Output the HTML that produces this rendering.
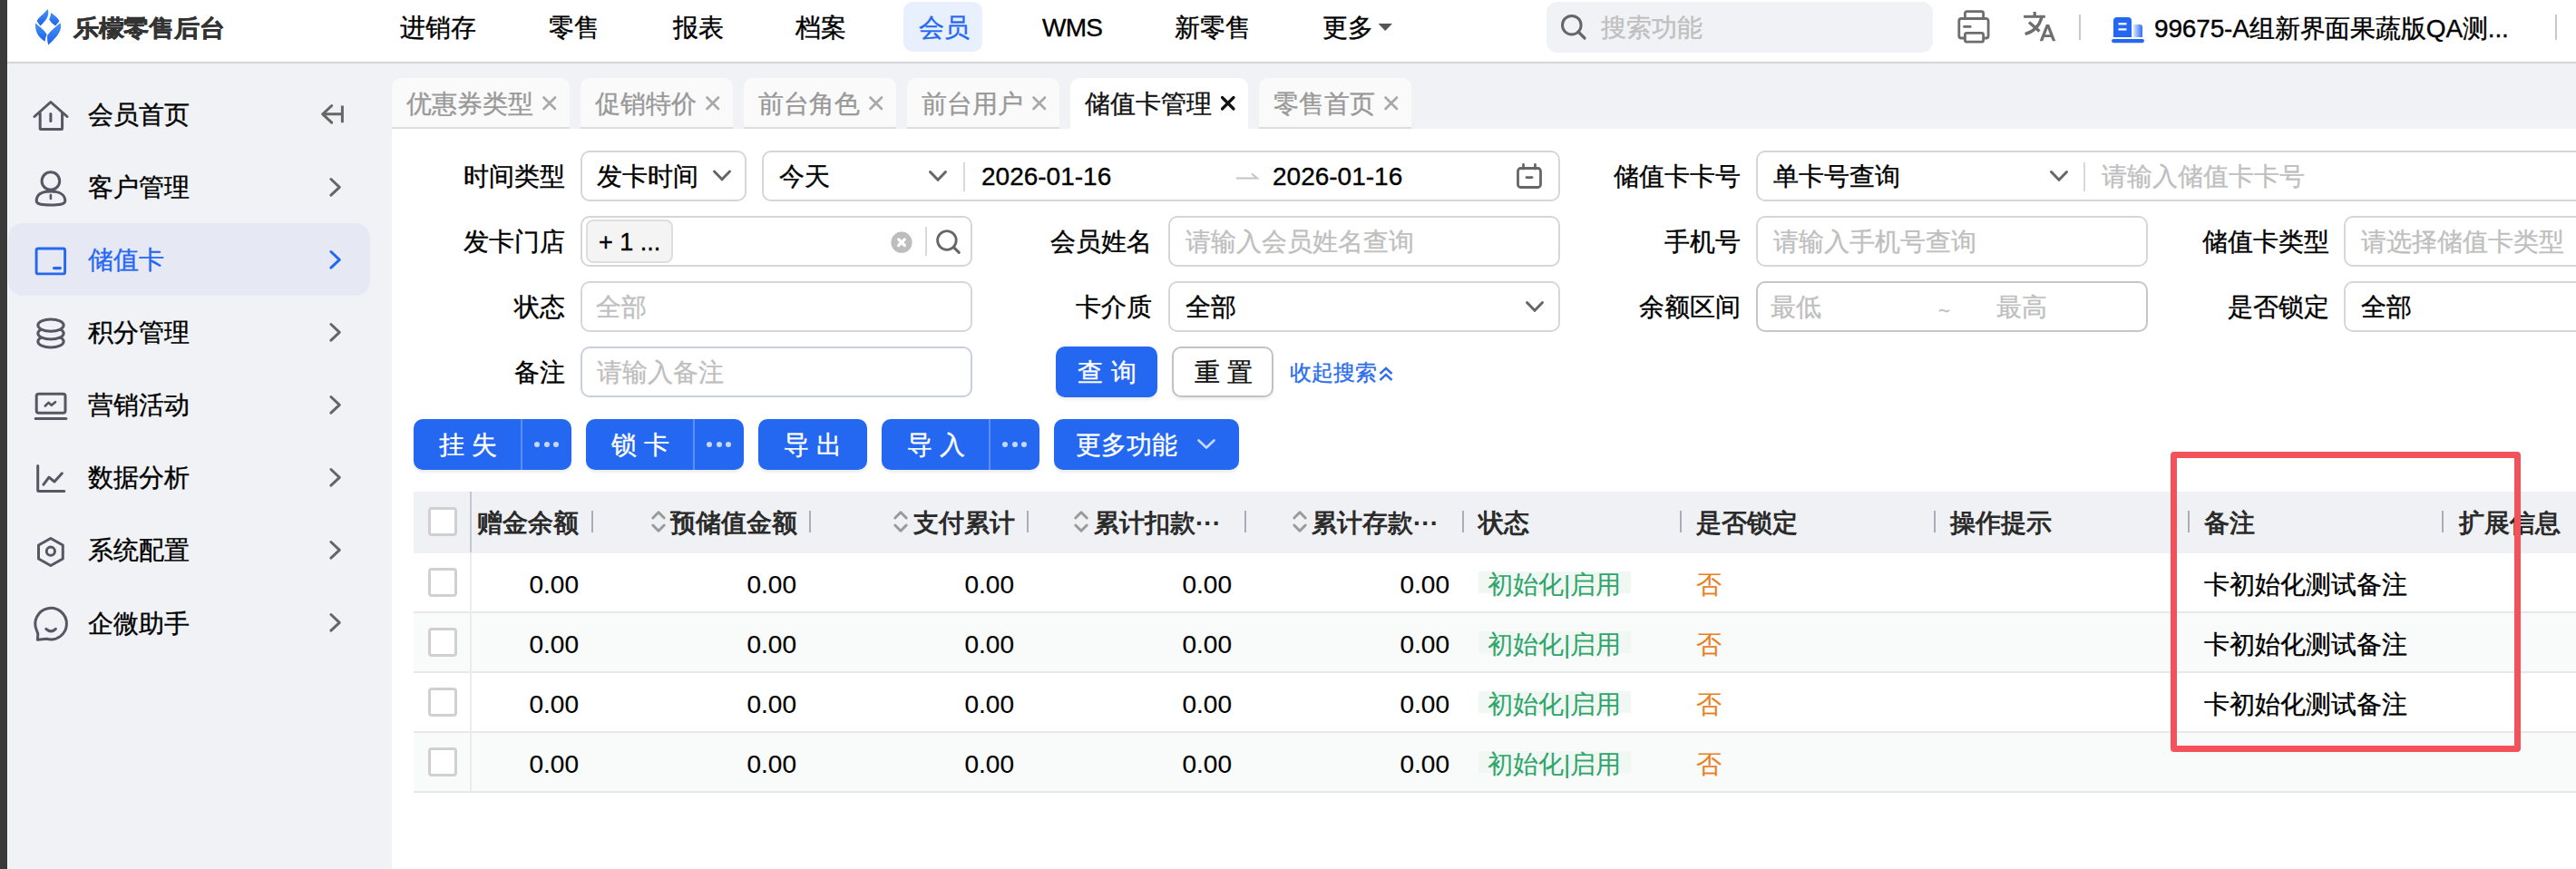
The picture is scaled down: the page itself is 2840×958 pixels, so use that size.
<!DOCTYPE html>
<html><head><meta charset="utf-8">
<style>
*{margin:0;padding:0;box-sizing:border-box}
html,body{width:2840px;height:958px;overflow:hidden;background:#fff;font-family:"Liberation Sans",sans-serif;color:#000}
.a{position:absolute}
.t{position:absolute;white-space:nowrap;font-size:28px;line-height:32px;-webkit-text-stroke:0.35px currentColor}
.r{text-align:right}
.ph{color:#bfbfbf}
.gy{color:#999}
.box{position:absolute;height:56px;border:2px solid #d6d6d6;border-radius:10px;background:#fff}
.tab{position:absolute;top:86px;height:56px;background:#fafafa;border-radius:10px 10px 0 0;border-bottom:2px solid #dcdcdc}
.btn{position:absolute;top:462px;height:56px;background:#2468f2;border-radius:10px;box-shadow:0 3px 3px rgba(0,0,0,0.07)}
.bt{color:#fff;letter-spacing:8px}
.dv{position:absolute;top:0;width:2px;height:56px;background:#5b8ff6}
.dots{position:absolute;top:487px;height:6px}
.dots i{position:absolute;top:0;width:6px;height:6px;border-radius:3px;background:#c6d7fb}
.hd{font-weight:bold;color:#2b2b2b;-webkit-text-stroke:0 !important}
.cb{position:absolute;left:472px;width:32px;height:32px;border:3px solid #d0d0d0;border-radius:4px;background:#fff}
.tag{position:absolute;left:1630px;width:168px;height:24px;background:#f1f8f4}
.gr{color:#2ea56a;-webkit-text-stroke:0.1px currentColor !important}.nm{-webkit-text-stroke:0.15px currentColor !important}
.or{color:#e8801e;-webkit-text-stroke:0.1px currentColor !important}
</style></head><body>
<!-- left window strip -->
<div class="a" style="left:0;top:0;width:8px;height:958px;background:#3a3a3a"></div>
<!-- header -->
<div class="a" style="left:8px;top:0;width:2832px;height:68px;background:#fff"></div>
<div class="a" style="left:8px;top:68px;width:2832px;height:2px;background:#d5d5d5"></div>
<!-- sidebar & content bg -->
<div class="a" style="left:8px;top:70px;width:2832px;height:888px;background:#f0f2f5"></div>
<div class="a" style="left:432px;top:142px;width:2408px;height:816px;background:#fff"></div>
<!-- logo -->
<svg class="a" style="left:34px;top:6px" width="40" height="48" viewBox="0 0 40 48">
<defs><linearGradient id="lg" x1="0" y1="0" x2="0" y2="1"><stop offset="0" stop-color="#4593f7"/><stop offset="1" stop-color="#1e62ea"/></linearGradient></defs>
<g fill="url(#lg)">
<path d="M18.5 4 C20.5 9 19 15 10.5 22.4 L6.6 17.2 C9 12.5 15 9 18.5 4 Z"/>
<path d="M22.1 8 C26.5 11 30 14 31.5 17.2 L27.1 22.4 C24 20.5 21.5 18 20.2 15.5 C21.3 13 22 10.5 22.1 8 Z"/>
<path d="M5 19.6 C9 23 15 27 17.7 32.3 C16.5 34.5 15.8 37 15.7 39.8 C8.5 35 4.5 30 5 19.6 Z"/>
<path d="M32.6 19.3 C34.5 27 31 33 19.3 43.6 C18 40 18 36 18.2 33.1 C22 27.5 28 23 32.6 19.3 Z"/>
</g></svg>
<div class="t" style="left:81px;top:17px;font-weight:bold;color:#333;font-size:28px;transform:scaleY(0.92);transform-origin:0 0;-webkit-text-stroke:0.5px #333;letter-spacing:-0.3px">乐檬零售后台</div>
<!-- nav -->
<div class="a" style="left:996px;top:2px;width:87px;height:55px;background:#e8effd;border-radius:10px"></div>
<div class="t" style="left:441px;top:15px">进销存</div>
<div class="t" style="left:605px;top:15px">零售</div>
<div class="t" style="left:742px;top:15px">报表</div>
<div class="t" style="left:877px;top:15px">档案</div>
<div class="t" style="left:1013px;top:15px;color:#2468f2">会员</div>
<div class="t" style="left:1149px;top:15px;letter-spacing:-0.8px">WMS</div>
<div class="t" style="left:1295px;top:15px">新零售</div>
<div class="t" style="left:1458px;top:15px">更多</div>
<svg class="a" style="left:1519px;top:25px" width="18" height="10"><path d="M0.5 1 L16 1 L8.2 9 Z" fill="#555"/></svg>
<!-- search -->
<div class="a" style="left:1705px;top:2px;width:426px;height:56px;background:#f1f2f5;border-radius:12px"></div>
<svg class="a" style="left:1715px;top:12px" width="40" height="40" viewBox="0 0 40 40"><circle cx="17.8" cy="15.7" r="10.3" fill="none" stroke="#666" stroke-width="3"/><path d="M25 23 L32 30" stroke="#666" stroke-width="3.2" stroke-linecap="round"/></svg>
<div class="t ph" style="left:1765px;top:15px">搜索功能</div>
<!-- printer -->
<svg class="a" style="left:2150px;top:5px" width="50" height="50" viewBox="0 0 50 50">
<g fill="none" stroke="#6e6e6e" stroke-width="2.8" stroke-linejoin="round">
<path d="M16.4 16 V9.6 a2 2 0 0 1 2 -2 H34.6 a2 2 0 0 1 2 2 V16"/>
<path d="M15.5 37 H12.3 a2.5 2.5 0 0 1 -2.5 -2.5 V18 a2.5 2.5 0 0 1 2.5 -2.5 H39.6 a2.5 2.5 0 0 1 2.5 2.5 V34.5 a2.5 2.5 0 0 1 -2.5 2.5 H36.5"/>
<rect x="16.4" y="31.4" width="20.2" height="9.8" rx="2"/>
<path d="M15.5 24.4 H22.2" stroke-linecap="round"/>
</g></svg>
<!-- translate -->
<svg class="a" style="left:2225px;top:8px" width="46" height="42" viewBox="0 0 46 42">
<g fill="none" stroke="#6e6e6e">
<path d="M6.1 10.3 H29.8" stroke-width="3"/>
<path d="M18.2 5 V10" stroke-width="3.2"/>
<path d="M26 11 C23.5 20 17 27 7.6 29.5" stroke-width="3.3"/>
<path d="M12 16.5 L23.5 26.5" stroke-width="3.3"/>
</g>
<path fill="#6e6e6e" fill-rule="evenodd" d="M30.8 19 L34.2 19 L41.3 37.2 L37.8 37.2 L36.2 33 L28.8 33 L27.2 37.2 L23.7 37.2 Z M29.9 30.2 L35.1 30.2 L32.5 23.2 Z"/>
</svg>
<div class="a" style="left:2292px;top:16px;width:2px;height:28px;background:#c8c8c8"></div>
<!-- building -->
<svg class="a" style="left:2326px;top:18px" width="40" height="32" viewBox="0 0 40 32">
<defs><linearGradient id="bg2" x1="0" y1="0" x2="1" y2="0"><stop offset="0" stop-color="#dbe6fd"/><stop offset="1" stop-color="#2f6ef2"/></linearGradient></defs>
<path d="M4 5 a4 4 0 0 1 4 -4 H20 a4 4 0 0 1 4 4 V23 H4 Z" fill="#2468f2"/>
<path d="M26 9 H33 a3 3 0 0 1 3 3 V23 H26 Z" fill="url(#bg2)"/>
<rect x="2" y="25" width="36" height="4.2" rx="2.1" fill="#2468f2"/>
<rect x="9.5" y="7.2" width="9" height="2.2" fill="#fff"/>
<rect x="9.5" y="13.3" width="9" height="2.2" fill="#fff"/>
</svg>
<div class="t" style="left:2375px;top:16px;letter-spacing:-0.15px">99675-A组新界面果蔬版QA测...</div>
<div class="a" style="left:2817px;top:16px;width:2px;height:28px;background:#c8c8c8"></div>
<!-- sidebar -->
<div class="a" style="left:8px;top:70px;width:1px;height:888px;background:#fafafa"></div>
<div class="a" style="left:9px;top:246px;width:399px;height:80px;background:#e6e9f4;border-radius:16px"></div>
<svg class="a" style="left:0;top:70px" width="432" height="660" viewBox="0 70 432 660">
<g fill="none" stroke="#555762" stroke-width="3" stroke-linecap="round" stroke-linejoin="round">
<!-- home -->
<path d="M38 128.5 L55.9 112.5 L74 128.5"/>
<path d="M44.2 125 V141.5 a1 1 0 0 0 1 1 H67.6 a1 1 0 0 0 1 -1 V125"/>
<path d="M55.9 125.5 V133.5"/>
<!-- person -->
<circle cx="55.9" cy="199.5" r="9.8"/>
<path d="M40.2 221.5 C40.2 214 47 211 55.9 211 C64.8 211 71.8 214 71.8 221.5 C71.8 225.5 64 226 55.9 226 C47.8 226 40.2 225.5 40.2 221.5 Z"/>
<path d="M55.9 215 V219" stroke-width="2.6"/>
<!-- coins -->
<ellipse cx="56" cy="376.5" rx="14.2" ry="6.6" fill="#f0f2f5"/>
<ellipse cx="56" cy="367.5" rx="14.2" ry="6.6" fill="#f0f2f5"/>
<ellipse cx="56" cy="358.6" rx="14.2" ry="6.6" fill="#f0f2f5"/>
<!-- monitor -->
<rect x="40.2" y="434.2" width="31.8" height="21" rx="2.5"/>
<path d="M39.2 461.5 H72.9"/>
<path d="M49.8 447.5 L53.5 443.8 L56.8 446.8 L61 443.2" stroke-width="2.6"/>
<!-- chart -->
<path d="M41.7 513.5 V540.5 a1 1 0 0 0 1 1 H70.8"/>
<path d="M48 534.2 L54 526.2 L60 531 L68.4 521.8"/>
<!-- hexagon -->
<path d="M55.9 593.5 L69.3 601 V616 L55.9 623.5 L42.5 616 V601 Z"/>
<circle cx="55.9" cy="607.7" r="4.6"/>
<!-- chat -->
<path d="M40.4 694.8 A17.3 17.3 0 1 1 51.5 704.3 L41.4 705.3 L41.8 698.8 Z"/>
<path d="M50.8 693.4 C54.5 696.8 58 696.8 61.4 693.4"/>
</g>
<g fill="none" stroke="#2468f2" stroke-width="2.9" stroke-linecap="round" stroke-linejoin="round">
<rect x="40.1" y="274" width="31.5" height="27.9" rx="2"/>
<path d="M59.6 295.6 H66.4" stroke-width="3.2"/>
</g>
<g fill="none" stroke="#666" stroke-width="3" stroke-linecap="round" stroke-linejoin="round">
<path d="M365.7 116.5 L355.8 125.8 L365.7 135.2"/>
<path d="M356 125.8 H376.5"/>
<path d="M377.4 116.5 V135.2" stroke-linecap="butt"/>
<path d="M364.9 197.5 L374.3 206.3 L364.9 215.1"/>
<path d="M364.9 277.5 L374.3 286.3 L364.9 295.1" stroke="#2468f2"/>
<path d="M364.9 357.5 L374.3 366.3 L364.9 375.1"/>
<path d="M364.9 437.5 L374.3 446.3 L364.9 455.1"/>
<path d="M364.9 517.5 L374.3 526.3 L364.9 535.1"/>
<path d="M364.9 597.5 L374.3 606.3 L364.9 615.1"/>
<path d="M364.9 677.5 L374.3 686.3 L364.9 695.1"/>
</g>
</svg>
<div class="t" style="left:97px;top:111px">会员首页</div>
<div class="t" style="left:97px;top:191px">客户管理</div>
<div class="t" style="left:97px;top:271px;color:#2468f2">储值卡</div>
<div class="t" style="left:97px;top:351px">积分管理</div>
<div class="t" style="left:97px;top:431px">营销活动</div>
<div class="t" style="left:97px;top:511px">数据分析</div>
<div class="t" style="left:97px;top:591px">系统配置</div>
<div class="t" style="left:97px;top:672px">企微助手</div>
<!-- tabs -->
<div class="tab" style="left:432px;width:196px"></div>
<div class="tab" style="left:640px;width:168px"></div>
<div class="tab" style="left:820px;width:168px"></div>
<div class="tab" style="left:1000px;width:168px"></div>
<div class="tab" style="left:1180px;width:196px;background:#fff;border-bottom:none;height:56px"></div>
<div class="tab" style="left:1388px;width:168px"></div>
<div class="t gy" style="left:448px;top:99px">优惠券类型</div>
<div class="t gy" style="left:656px;top:99px">促销特价</div>
<div class="t gy" style="left:836px;top:99px">前台角色</div>
<div class="t gy" style="left:1016px;top:99px">前台用户</div>
<div class="t" style="left:1196px;top:99px;color:#111">储值卡管理</div>
<div class="t gy" style="left:1404px;top:99px">零售首页</div>
<svg class="a" style="left:0;top:0" width="1600" height="150" viewBox="0 0 1600 150">
<g stroke="#a8a8a8" stroke-width="2.6" stroke-linecap="round">
<path d="M599.5 107.5 L612 120 M612 107.5 L599.5 120"/>
<path d="M779.5 107.5 L792 120 M792 107.5 L779.5 120"/>
<path d="M959.5 107.5 L972 120 M972 107.5 L959.5 120"/>
<path d="M1139.5 107.5 L1152 120 M1152 107.5 L1139.5 120"/>
<path d="M1347.5 107.5 L1360 120 M1360 107.5 L1347.5 120" stroke="#111" stroke-width="3.2"/>
<path d="M1527.5 107.5 L1540 120 M1540 107.5 L1527.5 120"/>
</g></svg>
<!-- form labels -->
<div class="t r" style="left:423px;width:200px;top:179px">时间类型</div>
<div class="t r" style="left:423px;width:200px;top:251px">发卡门店</div>
<div class="t r" style="left:423px;width:200px;top:323px">状态</div>
<div class="t r" style="left:423px;width:200px;top:395px">备注</div>
<div class="t r" style="left:1070px;width:200px;top:251px">会员姓名</div>
<div class="t r" style="left:1070px;width:200px;top:323px">卡介质</div>
<div class="t r" style="left:1719px;width:200px;top:179px">储值卡卡号</div>
<div class="t r" style="left:1719px;width:200px;top:251px">手机号</div>
<div class="t r" style="left:1719px;width:200px;top:323px">余额区间</div>
<div class="t r" style="left:2368px;width:200px;top:251px">储值卡类型</div>
<div class="t r" style="left:2368px;width:200px;top:323px">是否锁定</div>
<!-- row1 -->
<div class="box" style="left:640px;top:166px;width:183px"></div>
<div class="t" style="left:658px;top:179px">发卡时间</div>
<div class="box" style="left:840px;top:166px;width:880px"></div>
<div class="t" style="left:859px;top:179px">今天</div>
<div class="a" style="left:1062px;top:179px;width:2px;height:32px;background:#d9d9d9"></div>
<div class="t" style="left:1082px;top:179px">2026-01-16</div>
<div class="t" style="left:1403px;top:179px">2026-01-16</div>
<svg class="a" style="left:1360px;top:186px" width="30" height="16"><path d="M3 10.5 H26 L20 5.5" fill="none" stroke="#c4c4c4" stroke-width="2"/></svg>
<svg class="a" style="left:1668px;top:177px" width="36" height="40" viewBox="0 0 36 40">
<g fill="none" stroke="#666" stroke-width="2.8" stroke-linecap="round" stroke-linejoin="round">
<rect x="5.5" y="8.5" width="25" height="21" rx="3"/>
<path d="M11.5 4.5 V9 M24.5 4.5 V9"/>
<path d="M15 18.6 H21"/>
</g></svg>
<div class="box" style="left:1936px;top:166px;width:920px"></div>
<div class="t" style="left:1955px;top:179px">单卡号查询</div>
<div class="a" style="left:2297px;top:179px;width:2px;height:32px;background:#d9d9d9"></div>
<div class="t ph" style="left:2317px;top:179px">请输入储值卡卡号</div>
<!-- row2 -->
<div class="box" style="left:640px;top:238px;width:432px"></div>
<div class="a" style="left:646px;top:242px;width:96px;height:48px;background:#f4f4f4;border:2px solid #dedede;border-radius:8px"></div>
<div class="t" style="left:660px;top:251px;font-size:27px">+ 1 ...</div>
<svg class="a" style="left:978px;top:251px" width="32" height="32" viewBox="0 0 32 32"><circle cx="16" cy="16.2" r="11.6" fill="#bdbdbd"/><path d="M12.7 12.9 L19.3 19.5 M19.3 12.9 L12.7 19.5" stroke="#fff" stroke-width="3.2" stroke-linecap="round"/></svg>
<div class="a" style="left:1020px;top:250px;width:2px;height:32px;background:#d9d9d9"></div>
<svg class="a" style="left:1028px;top:250px" width="34" height="34" viewBox="0 0 34 34"><circle cx="15.9" cy="15" r="10.3" fill="none" stroke="#666" stroke-width="2.8"/><path d="M23.4 22.6 L29.3 28.4" stroke="#666" stroke-width="3" stroke-linecap="round"/></svg>
<div class="box" style="left:1288px;top:238px;width:432px"></div>
<div class="t ph" style="left:1307px;top:251px">请输入会员姓名查询</div>
<div class="box" style="left:1936px;top:238px;width:432px"></div>
<div class="t ph" style="left:1955px;top:251px">请输入手机号查询</div>
<div class="box" style="left:2584px;top:238px;width:300px"></div>
<div class="t ph" style="left:2603px;top:251px">请选择储值卡类型</div>
<!-- row3 -->
<div class="box" style="left:640px;top:310px;width:432px"></div>
<div class="t ph" style="left:657px;top:323px">全部</div>
<div class="box" style="left:1288px;top:310px;width:432px"></div>
<div class="t" style="left:1307px;top:323px">全部</div>
<div class="box" style="left:1936px;top:310px;width:432px;border-color:#c6c6c6"></div>
<div class="t ph" style="left:1952px;top:323px">最低</div>
<div class="t ph" style="left:2137px;top:327px;font-size:22px">~</div>
<div class="t ph" style="left:2201px;top:323px">最高</div>
<div class="box" style="left:2584px;top:310px;width:300px"></div>
<div class="t" style="left:2603px;top:323px">全部</div>
<!-- row4 -->
<div class="box" style="left:640px;top:382px;width:432px;border-color:#c9d0dc"></div>
<div class="t ph" style="left:658px;top:395px">请输入备注</div>
<div class="a" style="left:1164px;top:382px;width:112px;height:56px;background:#2468f2;border-radius:10px;box-shadow:0 3px 3px rgba(0,0,0,0.07)"></div>
<div class="t" style="left:1188px;top:395px;color:#fff;letter-spacing:9px">查询</div>
<div class="a" style="left:1292px;top:382px;width:112px;height:56px;border:2px solid #c2c2c2;border-radius:10px;background:#fff;box-shadow:0 3px 3px rgba(0,0,0,0.05)"></div>
<div class="t" style="left:1317px;top:395px;color:#111;letter-spacing:8px">重置</div>
<div class="t" style="left:1422px;top:395px;color:#2f6fea;font-size:24px">收起搜索</div>
<svg class="a" style="left:1518px;top:401px" width="20" height="24" viewBox="0 0 20 24"><path d="M3.5 11 L10 5 L16.5 11 M3.5 18 L10 12 L16.5 18" fill="none" stroke="#2f6fea" stroke-width="2.4"/></svg>
<svg class="a" style="left:0;top:150px" width="2400" height="200" viewBox="0 150 2400 200">
<g fill="none" stroke="#666" stroke-width="3" stroke-linecap="round" stroke-linejoin="round">
<path d="M787.5 189 L796 197.8 L804.5 189"/>
<path d="M1025.5 189.5 L1034 198.3 L1042.5 189.5"/>
<path d="M2261.5 189.5 L2270 198.3 L2278.5 189.5"/>
<path d="M1683.5 333.5 L1692 342.3 L1700.5 333.5"/>
</g></svg>
<!-- action buttons -->
<div class="btn" style="left:456px;width:174px"><div class="dv" style="left:118px"></div></div>
<div class="t bt" style="left:484px;top:475px">挂失</div>
<div class="dots" style="left:589px"><i style="left:0"></i><i style="left:10.7px"></i><i style="left:21.4px"></i></div>
<div class="btn" style="left:646px;width:174px"><div class="dv" style="left:118px"></div></div>
<div class="t bt" style="left:674px;top:475px">锁卡</div>
<div class="dots" style="left:779px"><i style="left:0"></i><i style="left:10.7px"></i><i style="left:21.4px"></i></div>
<div class="btn" style="left:836px;width:120px"></div>
<div class="t bt" style="left:864px;top:475px">导出</div>
<div class="btn" style="left:972px;width:174px"><div class="dv" style="left:118px"></div></div>
<div class="t bt" style="left:1000px;top:475px">导入</div>
<div class="dots" style="left:1105px"><i style="left:0"></i><i style="left:10.7px"></i><i style="left:21.4px"></i></div>
<div class="btn" style="left:1162px;width:204px"></div>
<div class="t" style="left:1186px;top:475px;color:#fff">更多功能</div>
<svg class="a" style="left:1318px;top:480px" width="24" height="20"><path d="M3.5 5.5 L12 13.5 L20.5 5.5" fill="none" stroke="#c6d7fb" stroke-width="2.6" stroke-linecap="round" stroke-linejoin="round"/></svg>
<!-- table -->
<div class="a" style="left:456px;top:542px;width:2384px;height:68px;background:#f0f1f4"></div>
<div class="a" style="left:456px;top:675px;width:2384px;height:65px;background:#f9fafa"></div>
<div class="a" style="left:456px;top:807px;width:2384px;height:66px;background:#f9fafa"></div>
<div class="a" style="left:456px;top:674px;width:2384px;height:2px;background:#e8e8e8"></div>
<div class="a" style="left:456px;top:740px;width:2384px;height:2px;background:#e8e8e8"></div>
<div class="a" style="left:456px;top:806px;width:2384px;height:2px;background:#e8e8e8"></div>
<div class="a" style="left:456px;top:872px;width:2384px;height:2px;background:#e8e8e8"></div>
<div class="a" style="left:518px;top:542px;width:2px;height:67px;background:#c4c7cf"></div>
<div class="a" style="left:518px;top:609px;width:2px;height:264px;background:#ececec"></div>
<div class="cb" style="top:559px"></div>
<div class="cb" style="top:626px"></div>
<div class="cb" style="top:692px"></div>
<div class="cb" style="top:758px"></div>
<div class="cb" style="top:824px"></div>
<!-- header cells -->
<div class="t hd" style="left:526px;top:561px">赠金余额</div>
<div class="t hd" style="left:739px;top:561px">预储值金额</div>
<div class="t hd" style="left:1007px;top:561px">支付累计</div>
<div class="t hd" style="left:1206px;top:561px">累计扣款···</div>
<div class="t hd" style="left:1446px;top:561px">累计存款···</div>
<div class="t hd" style="left:1630px;top:561px">状态</div>
<div class="t hd" style="left:1870px;top:561px">是否锁定</div>
<div class="t hd" style="left:2150px;top:561px">操作提示</div>
<div class="t hd" style="left:2430px;top:561px">备注</div>
<div class="t hd" style="left:2711px;top:561px">扩展信息</div>
<svg class="a" style="left:0;top:540px" width="2840" height="70" viewBox="0 540 2840 70">
<g fill="#a9adb7">
<rect x="652" y="563" width="2" height="24"/><rect x="892" y="563" width="2" height="24"/>
<rect x="1132" y="563" width="2" height="24"/><rect x="1372" y="563" width="2" height="24"/>
<rect x="1612" y="563" width="2" height="24"/><rect x="1852" y="563" width="2" height="24"/>
<rect x="2132" y="563" width="2" height="24"/><rect x="2412" y="563" width="2" height="24"/>
<rect x="2692" y="563" width="2" height="24"/>
</g>
<g fill="none" stroke="#9a9a9a" stroke-width="3" stroke-linecap="round" stroke-linejoin="round">
<path d="M719.8 571 L726 564.8 L732.2 571 M719.8 579 L726 585.2 L732.2 579"/>
<path d="M986.8 571 L993 564.8 L999.2 571 M986.8 579 L993 585.2 L999.2 579"/>
<path d="M1185.8 571 L1192 564.8 L1198.2 571 M1185.8 579 L1192 585.2 L1198.2 579"/>
<path d="M1426.8 571 L1433 564.8 L1439.2 571 M1426.8 579 L1433 585.2 L1439.2 579"/>
</g></svg>
<div class="t r nm" style="left:488px;width:150px;top:629px">0.00</div>
<div class="t r nm" style="left:728px;width:150px;top:629px">0.00</div>
<div class="t r nm" style="left:968px;width:150px;top:629px">0.00</div>
<div class="t r nm" style="left:1208px;width:150px;top:629px">0.00</div>
<div class="t r nm" style="left:1448px;width:150px;top:629px">0.00</div>
<div class="tag" style="top:630px"></div>
<div class="t gr" style="left:1640px;top:629px">初始化|启用</div>
<div class="t or" style="left:1870px;top:629px">否</div>
<div class="t" style="left:2430px;top:629px">卡初始化测试备注</div>
<div class="t r nm" style="left:488px;width:150px;top:695px">0.00</div>
<div class="t r nm" style="left:728px;width:150px;top:695px">0.00</div>
<div class="t r nm" style="left:968px;width:150px;top:695px">0.00</div>
<div class="t r nm" style="left:1208px;width:150px;top:695px">0.00</div>
<div class="t r nm" style="left:1448px;width:150px;top:695px">0.00</div>
<div class="tag" style="top:696px"></div>
<div class="t gr" style="left:1640px;top:695px">初始化|启用</div>
<div class="t or" style="left:1870px;top:695px">否</div>
<div class="t" style="left:2430px;top:695px">卡初始化测试备注</div>
<div class="t r nm" style="left:488px;width:150px;top:761px">0.00</div>
<div class="t r nm" style="left:728px;width:150px;top:761px">0.00</div>
<div class="t r nm" style="left:968px;width:150px;top:761px">0.00</div>
<div class="t r nm" style="left:1208px;width:150px;top:761px">0.00</div>
<div class="t r nm" style="left:1448px;width:150px;top:761px">0.00</div>
<div class="tag" style="top:762px"></div>
<div class="t gr" style="left:1640px;top:761px">初始化|启用</div>
<div class="t or" style="left:1870px;top:761px">否</div>
<div class="t" style="left:2430px;top:761px">卡初始化测试备注</div>
<div class="t r nm" style="left:488px;width:150px;top:827px">0.00</div>
<div class="t r nm" style="left:728px;width:150px;top:827px">0.00</div>
<div class="t r nm" style="left:968px;width:150px;top:827px">0.00</div>
<div class="t r nm" style="left:1208px;width:150px;top:827px">0.00</div>
<div class="t r nm" style="left:1448px;width:150px;top:827px">0.00</div>
<div class="tag" style="top:828px"></div>
<div class="t gr" style="left:1640px;top:827px">初始化|启用</div>
<div class="t or" style="left:1870px;top:827px">否</div>
<!-- red highlight box -->
<div class="a" style="left:2393px;top:498px;width:386px;height:331px;border:7.5px solid #f4525a;border-radius:4px"></div>
</body></html>
